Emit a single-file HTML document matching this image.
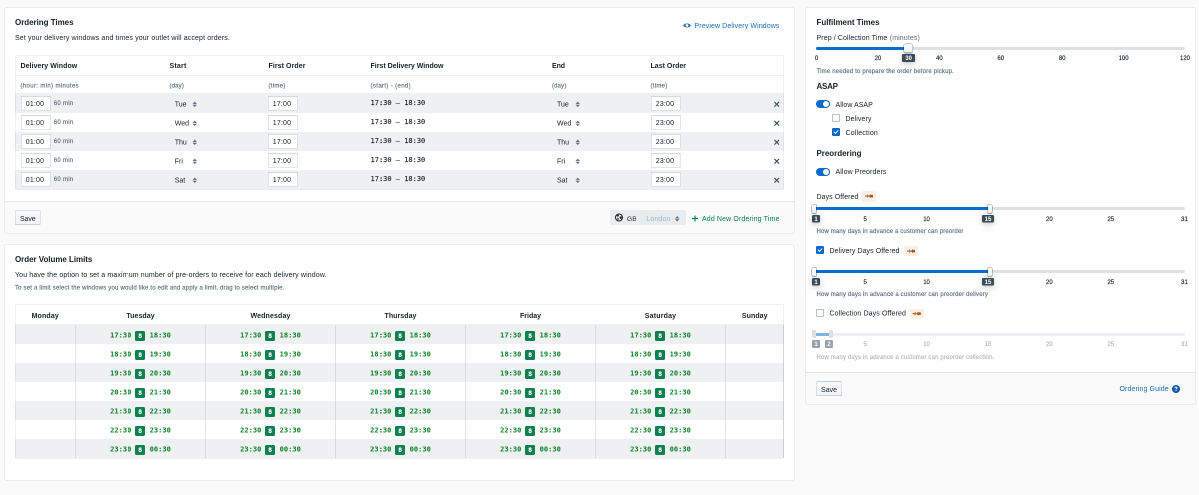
<!DOCTYPE html>
<html lang="en"><head><meta charset="utf-8"><title>Ordering Times</title>
<style>
html,body{margin:0;padding:0;background:#fafafa;overflow:hidden;width:1199px;height:495px}
#r{position:absolute;left:0;top:0;width:2398px;height:990px;transform:scale(.5);transform-origin:0 0;will-change:transform;font-family:"Liberation Sans", Arial, sans-serif;color:#182026;}
#r div,#r .a,#r .t{position:absolute}
#r .t{white-space:nowrap;display:block}
#r .m{font-family:"DejaVu Sans Mono", "Liberation Mono", monospace}
</style></head>
<body>
<div id="r">
<div style="left:10px;top:16px;width:1578px;height:450px;background:#fff;border-radius:3px;box-shadow:0 0 0 1px rgba(16,22,26,.13);"></div>
<div style="left:10px;top:403px;width:1578px;height:63px;background:#fafafa;border-top:1px solid #cdd2d6;border-radius:0 0 3px 3px;box-sizing:border-box;"></div>
<div style="left:10px;top:490px;width:1578px;height:470px;background:#fff;border-radius:3px;box-shadow:0 0 0 1px rgba(16,22,26,.13);"></div>
<div style="left:1612px;top:16px;width:779px;height:792px;background:#fff;border-radius:3px;box-shadow:0 0 0 1px rgba(16,22,26,.13);"></div>
<div style="left:1612px;top:744px;width:779px;height:64px;background:#fafafa;border-top:1px solid #cdd2d6;border-radius:0 0 3px 3px;box-sizing:border-box;"></div>
<span id="t1" class="t" style="left:30px;top:37.46px;font-size:16px;line-height:16px;font-weight:700;letter-spacing:-0.069px;">Ordering Times</span>
<span id="t2" class="t" style="left:30px;top:67.65px;font-size:14px;line-height:14px;letter-spacing:0.274px;">Set your delivery windows and times your outlet will accept orders.</span>
<svg class="a" style="left:1366px;top:43px" width="16" height="16" viewBox="0 0 16 16"><path fill="#1a6cb8" fill-rule="evenodd" d="M.2 8C3 2.600 13 2.600 15.800 8 13 13.400 3 13.400.2 8zM8 5.200a2.800 2.800 0 1 0 0 5.600 2.800 2.800 0 0 0 0-5.600z"/></svg>
<span id="t3" class="t" style="left:1389px;top:44.15px;font-size:14px;line-height:14px;color:#1c6db6;letter-spacing:0.211px;">Preview Delivery Windows</span>
<div style="left:30px;top:110px;width:1538px;height:269px;border-radius:3px;background:#fff;"></div>
<div style="left:31px;top:151px;width:1536px;height:1px;background:#e1e4e7;"></div>
<span id="t4" class="t" style="left:41px;top:124.15px;font-size:14px;line-height:14px;font-weight:700;letter-spacing:0.113px;">Delivery Window</span>
<span id="t5" class="t" style="left:339px;top:124.15px;font-size:14px;line-height:14px;font-weight:700;letter-spacing:0.419px;">Start</span>
<span id="t6" class="t" style="left:537px;top:124.15px;font-size:14px;line-height:14px;font-weight:700;letter-spacing:0.149px;">First Order</span>
<span id="t7" class="t" style="left:741px;top:124.15px;font-size:14px;line-height:14px;font-weight:700;letter-spacing:-0.006px;">First Delivery Window</span>
<span id="t8" class="t" style="left:1104px;top:124.15px;font-size:14px;line-height:14px;font-weight:700;letter-spacing:-0.151px;">End</span>
<span id="t9" class="t" style="left:1301px;top:124.15px;font-size:14px;line-height:14px;font-weight:700;letter-spacing:0.019px;">Last Order</span>
<span id="t10" class="t" style="left:41px;top:164.74px;font-size:12px;line-height:12px;color:#5c7080;letter-spacing:0.717px;-webkit-text-stroke:.3px;">(hour: min) minutes</span>
<span id="t11" class="t" style="left:339px;top:164.74px;font-size:12px;line-height:12px;color:#5c7080;letter-spacing:0.331px;-webkit-text-stroke:.3px;">(day)</span>
<span id="t12" class="t" style="left:537px;top:164.74px;font-size:12px;line-height:12px;color:#5c7080;letter-spacing:0.555px;-webkit-text-stroke:.3px;">(time)</span>
<span id="t13" class="t" style="left:741px;top:164.74px;font-size:12px;line-height:12px;color:#5c7080;letter-spacing:0.732px;-webkit-text-stroke:.3px;">(start) - (end)</span>
<span id="t14" class="t" style="left:1104px;top:164.74px;font-size:12px;line-height:12px;color:#5c7080;letter-spacing:0.331px;-webkit-text-stroke:.3px;">(day)</span>
<span id="t15" class="t" style="left:1301px;top:164.74px;font-size:12px;line-height:12px;color:#5c7080;letter-spacing:0.555px;-webkit-text-stroke:.3px;">(time)</span>
<div style="left:29.5px;top:186px;width:1538.5px;height:39.5px;background:#eef0f2;"></div>
<div style="left:42px;top:192px;width:59px;height:29px;background:#fff;border:1px solid #c8ced3;border-top-color:#adb5bc;box-sizing:border-box;"></div>
<span id="t16" class="t" style="left:51.5px;top:200.15px;font-size:14px;line-height:14px;letter-spacing:0.351px;">01:00</span>
<span id="t17" class="t" style="left:107.5px;top:200.24px;font-size:12px;line-height:12px;color:#5c7080;letter-spacing:0.578px;-webkit-text-stroke:.3px;">60 min</span>
<span id="t18" class="t" style="left:349.5px;top:201.15px;font-size:14px;line-height:14px;">Tue</span>
<svg class="a" style="left:385px;top:202.5px" width="9" height="11.5" viewBox="0 0 10 12"><path fill="#5c7080" d="M5 0 L9.4 4.8 H.6z M5 12 L9.4 7.2 H.6z"/><rect x=".6" y="4" width="8.800" height="1" fill="#5c7080"/><rect x=".6" y="7" width="8.800" height="1" fill="#5c7080"/></svg>
<div style="left:536px;top:192px;width:59px;height:29px;background:#fff;border:1px solid #c8ced3;border-top-color:#adb5bc;box-sizing:border-box;"></div>
<span id="t19" class="t" style="left:545.5px;top:200.15px;font-size:14px;line-height:14px;letter-spacing:0.351px;">17:00</span>
<span id="t20" class="t m" style="left:741px;top:197.96px;font-size:14px;line-height:14px;letter-spacing:-0.006px;-webkit-text-stroke:.25px;">17:30 – 18:30</span>
<span id="t21" class="t" style="left:1114px;top:201.15px;font-size:14px;line-height:14px;">Tue</span>
<svg class="a" style="left:1151px;top:202.5px" width="9" height="11.5" viewBox="0 0 10 12"><path fill="#5c7080" d="M5 0 L9.4 4.8 H.6z M5 12 L9.4 7.2 H.6z"/><rect x=".6" y="4" width="8.800" height="1" fill="#5c7080"/><rect x=".6" y="7" width="8.800" height="1" fill="#5c7080"/></svg>
<div style="left:1302px;top:192px;width:59px;height:29px;background:#fff;border:1px solid #c8ced3;border-top-color:#adb5bc;box-sizing:border-box;"></div>
<span id="t22" class="t" style="left:1311.5px;top:200.15px;font-size:14px;line-height:14px;letter-spacing:0.351px;">23:00</span>
<svg class="a" style="left:1548.3px;top:202.8px" width="11" height="11" viewBox="0 0 11 11"><path d="M1.500 1.500 L9.500 9.500 M9.500 1.500 L1.500 9.500" stroke="#394b59" stroke-width="2.300" stroke-linecap="round"/></svg>
<div style="left:42px;top:230px;width:59px;height:29px;background:#fff;border:1px solid #c8ced3;border-top-color:#adb5bc;box-sizing:border-box;"></div>
<span id="t23" class="t" style="left:51.5px;top:238.15px;font-size:14px;line-height:14px;letter-spacing:0.351px;">01:00</span>
<span id="t24" class="t" style="left:107.5px;top:238.24px;font-size:12px;line-height:12px;color:#5c7080;letter-spacing:0.578px;-webkit-text-stroke:.3px;">60 min</span>
<span id="t25" class="t" style="left:349.5px;top:239.15px;font-size:14px;line-height:14px;">Wed</span>
<svg class="a" style="left:385px;top:240.5px" width="9" height="11.5" viewBox="0 0 10 12"><path fill="#5c7080" d="M5 0 L9.4 4.8 H.6z M5 12 L9.4 7.2 H.6z"/><rect x=".6" y="4" width="8.800" height="1" fill="#5c7080"/><rect x=".6" y="7" width="8.800" height="1" fill="#5c7080"/></svg>
<div style="left:536px;top:230px;width:59px;height:29px;background:#fff;border:1px solid #c8ced3;border-top-color:#adb5bc;box-sizing:border-box;"></div>
<span id="t26" class="t" style="left:545.5px;top:238.15px;font-size:14px;line-height:14px;letter-spacing:0.351px;">17:00</span>
<span id="t27" class="t m" style="left:741px;top:235.96px;font-size:14px;line-height:14px;letter-spacing:-0.006px;-webkit-text-stroke:.25px;">17:30 – 18:30</span>
<span id="t28" class="t" style="left:1114px;top:239.15px;font-size:14px;line-height:14px;">Wed</span>
<svg class="a" style="left:1151px;top:240.5px" width="9" height="11.5" viewBox="0 0 10 12"><path fill="#5c7080" d="M5 0 L9.4 4.8 H.6z M5 12 L9.4 7.2 H.6z"/><rect x=".6" y="4" width="8.800" height="1" fill="#5c7080"/><rect x=".6" y="7" width="8.800" height="1" fill="#5c7080"/></svg>
<div style="left:1302px;top:230px;width:59px;height:29px;background:#fff;border:1px solid #c8ced3;border-top-color:#adb5bc;box-sizing:border-box;"></div>
<span id="t29" class="t" style="left:1311.5px;top:238.15px;font-size:14px;line-height:14px;letter-spacing:0.351px;">23:00</span>
<svg class="a" style="left:1548.3px;top:240.8px" width="11" height="11" viewBox="0 0 11 11"><path d="M1.500 1.500 L9.500 9.500 M9.500 1.500 L1.500 9.500" stroke="#394b59" stroke-width="2.300" stroke-linecap="round"/></svg>
<div style="left:29.5px;top:263.5px;width:1538.5px;height:38.0px;background:#eef0f2;"></div>
<div style="left:42px;top:268px;width:59px;height:29px;background:#fff;border:1px solid #c8ced3;border-top-color:#adb5bc;box-sizing:border-box;"></div>
<span id="t30" class="t" style="left:51.5px;top:276.15px;font-size:14px;line-height:14px;letter-spacing:0.351px;">01:00</span>
<span id="t31" class="t" style="left:107.5px;top:276.23999999999995px;font-size:12px;line-height:12px;color:#5c7080;letter-spacing:0.578px;-webkit-text-stroke:.3px;">60 min</span>
<span id="t32" class="t" style="left:349.5px;top:277.15px;font-size:14px;line-height:14px;">Thu</span>
<svg class="a" style="left:385px;top:278.5px" width="9" height="11.5" viewBox="0 0 10 12"><path fill="#5c7080" d="M5 0 L9.4 4.8 H.6z M5 12 L9.4 7.2 H.6z"/><rect x=".6" y="4" width="8.800" height="1" fill="#5c7080"/><rect x=".6" y="7" width="8.800" height="1" fill="#5c7080"/></svg>
<div style="left:536px;top:268px;width:59px;height:29px;background:#fff;border:1px solid #c8ced3;border-top-color:#adb5bc;box-sizing:border-box;"></div>
<span id="t33" class="t" style="left:545.5px;top:276.15px;font-size:14px;line-height:14px;letter-spacing:0.351px;">17:00</span>
<span id="t34" class="t m" style="left:741px;top:273.96px;font-size:14px;line-height:14px;letter-spacing:-0.006px;-webkit-text-stroke:.25px;">17:30 – 18:30</span>
<span id="t35" class="t" style="left:1114px;top:277.15px;font-size:14px;line-height:14px;">Thu</span>
<svg class="a" style="left:1151px;top:278.5px" width="9" height="11.5" viewBox="0 0 10 12"><path fill="#5c7080" d="M5 0 L9.4 4.8 H.6z M5 12 L9.4 7.2 H.6z"/><rect x=".6" y="4" width="8.800" height="1" fill="#5c7080"/><rect x=".6" y="7" width="8.800" height="1" fill="#5c7080"/></svg>
<div style="left:1302px;top:268px;width:59px;height:29px;background:#fff;border:1px solid #c8ced3;border-top-color:#adb5bc;box-sizing:border-box;"></div>
<span id="t36" class="t" style="left:1311.5px;top:276.15px;font-size:14px;line-height:14px;letter-spacing:0.351px;">23:00</span>
<svg class="a" style="left:1548.3px;top:278.8px" width="11" height="11" viewBox="0 0 11 11"><path d="M1.500 1.500 L9.500 9.500 M9.500 1.500 L1.500 9.500" stroke="#394b59" stroke-width="2.300" stroke-linecap="round"/></svg>
<div style="left:42px;top:306px;width:59px;height:29px;background:#fff;border:1px solid #c8ced3;border-top-color:#adb5bc;box-sizing:border-box;"></div>
<span id="t37" class="t" style="left:51.5px;top:314.15px;font-size:14px;line-height:14px;letter-spacing:0.351px;">01:00</span>
<span id="t38" class="t" style="left:107.5px;top:314.23999999999995px;font-size:12px;line-height:12px;color:#5c7080;letter-spacing:0.578px;-webkit-text-stroke:.3px;">60 min</span>
<span id="t39" class="t" style="left:349.5px;top:315.15px;font-size:14px;line-height:14px;">Fri</span>
<svg class="a" style="left:385px;top:316.5px" width="9" height="11.5" viewBox="0 0 10 12"><path fill="#5c7080" d="M5 0 L9.4 4.8 H.6z M5 12 L9.4 7.2 H.6z"/><rect x=".6" y="4" width="8.800" height="1" fill="#5c7080"/><rect x=".6" y="7" width="8.800" height="1" fill="#5c7080"/></svg>
<div style="left:536px;top:306px;width:59px;height:29px;background:#fff;border:1px solid #c8ced3;border-top-color:#adb5bc;box-sizing:border-box;"></div>
<span id="t40" class="t" style="left:545.5px;top:314.15px;font-size:14px;line-height:14px;letter-spacing:0.351px;">17:00</span>
<span id="t41" class="t m" style="left:741px;top:311.96px;font-size:14px;line-height:14px;letter-spacing:-0.006px;-webkit-text-stroke:.25px;">17:30 – 18:30</span>
<span id="t42" class="t" style="left:1114px;top:315.15px;font-size:14px;line-height:14px;">Fri</span>
<svg class="a" style="left:1151px;top:316.5px" width="9" height="11.5" viewBox="0 0 10 12"><path fill="#5c7080" d="M5 0 L9.4 4.8 H.6z M5 12 L9.4 7.2 H.6z"/><rect x=".6" y="4" width="8.800" height="1" fill="#5c7080"/><rect x=".6" y="7" width="8.800" height="1" fill="#5c7080"/></svg>
<div style="left:1302px;top:306px;width:59px;height:29px;background:#fff;border:1px solid #c8ced3;border-top-color:#adb5bc;box-sizing:border-box;"></div>
<span id="t43" class="t" style="left:1311.5px;top:314.15px;font-size:14px;line-height:14px;letter-spacing:0.351px;">23:00</span>
<svg class="a" style="left:1548.3px;top:316.8px" width="11" height="11" viewBox="0 0 11 11"><path d="M1.500 1.500 L9.500 9.500 M9.500 1.500 L1.500 9.500" stroke="#394b59" stroke-width="2.300" stroke-linecap="round"/></svg>
<div style="left:29.5px;top:339.5px;width:1538.5px;height:39.5px;background:#eef0f2;border-radius:0 0 2px 2px;"></div>
<div style="left:42px;top:344px;width:59px;height:29px;background:#fff;border:1px solid #c8ced3;border-top-color:#adb5bc;box-sizing:border-box;"></div>
<span id="t44" class="t" style="left:51.5px;top:352.15px;font-size:14px;line-height:14px;letter-spacing:0.351px;">01:00</span>
<span id="t45" class="t" style="left:107.5px;top:352.23999999999995px;font-size:12px;line-height:12px;color:#5c7080;letter-spacing:0.578px;-webkit-text-stroke:.3px;">60 min</span>
<span id="t46" class="t" style="left:349.5px;top:353.15px;font-size:14px;line-height:14px;">Sat</span>
<svg class="a" style="left:385px;top:354.5px" width="9" height="11.5" viewBox="0 0 10 12"><path fill="#5c7080" d="M5 0 L9.4 4.8 H.6z M5 12 L9.4 7.2 H.6z"/><rect x=".6" y="4" width="8.800" height="1" fill="#5c7080"/><rect x=".6" y="7" width="8.800" height="1" fill="#5c7080"/></svg>
<div style="left:536px;top:344px;width:59px;height:29px;background:#fff;border:1px solid #c8ced3;border-top-color:#adb5bc;box-sizing:border-box;"></div>
<span id="t47" class="t" style="left:545.5px;top:352.15px;font-size:14px;line-height:14px;letter-spacing:0.351px;">17:00</span>
<span id="t48" class="t m" style="left:741px;top:349.96px;font-size:14px;line-height:14px;letter-spacing:-0.006px;-webkit-text-stroke:.25px;">17:30 – 18:30</span>
<span id="t49" class="t" style="left:1114px;top:353.15px;font-size:14px;line-height:14px;">Sat</span>
<svg class="a" style="left:1151px;top:354.5px" width="9" height="11.5" viewBox="0 0 10 12"><path fill="#5c7080" d="M5 0 L9.4 4.8 H.6z M5 12 L9.4 7.2 H.6z"/><rect x=".6" y="4" width="8.800" height="1" fill="#5c7080"/><rect x=".6" y="7" width="8.800" height="1" fill="#5c7080"/></svg>
<div style="left:1302px;top:344px;width:59px;height:29px;background:#fff;border:1px solid #c8ced3;border-top-color:#adb5bc;box-sizing:border-box;"></div>
<span id="t50" class="t" style="left:1311.5px;top:352.15px;font-size:14px;line-height:14px;letter-spacing:0.351px;">23:00</span>
<svg class="a" style="left:1548.3px;top:354.8px" width="11" height="11" viewBox="0 0 11 11"><path d="M1.500 1.500 L9.500 9.500 M9.500 1.500 L1.500 9.500" stroke="#394b59" stroke-width="2.300" stroke-linecap="round"/></svg>
<div style="left:29.5px;top:110px;width:1538.5px;height:269px;border:1px solid rgba(16,22,26,.12);border-radius:3px;box-sizing:border-box;"></div>
<div style="left:30px;top:420px;width:51px;height:30px;background:linear-gradient(#f7f9fb,#f1f4f6);box-shadow:inset 0 0 0 1px rgba(16,22,26,.2),inset 0 -1px 0 rgba(16,22,26,.1);border-radius:3px;"></div>
<span id="t51" class="t" style="left:55.5px;transform:translateX(-50%);top:429.85px;font-size:14px;line-height:14px;letter-spacing:-0.23px;">Save</span>
<div style="left:1220px;top:420px;width:63px;height:30px;background:#ebeef0;border-radius:3px 0 0 3px;"></div>
<div style="left:1283px;top:420px;width:89px;height:30px;background:#e8ecef;border-radius:0 3px 3px 0;border-left:1px solid #dde2e6;box-sizing:border-box;"></div>
<svg class="a" style="left:1230px;top:427px" width="16" height="16" viewBox="0 0 16 16"><circle cx="8" cy="8" r="7" fill="none" stroke="#182026" stroke-width="2"/><path fill="#182026" d="M4.2 3.2 7 2.6 8 4.4 6.6 6 4.6 6.4 3.4 5z M9.4 6.4 12.6 5.6 14 8.4 12.2 11 10.4 10.4 9 8.4z M4.8 8.6 7.2 9.4 7.4 11.8 6 13.6 4.4 11z"/></svg>
<span id="t52" class="t" style="left:1254px;top:431.0px;font-size:13px;line-height:13px;letter-spacing:0.352px;">GB</span>
<span id="t53" class="t" style="left:1292.6px;top:430.15px;font-size:14px;line-height:14px;color:#a9b5bf;letter-spacing:0.297px;">London</span>
<svg class="a" style="left:1349.5px;top:431.5px" width="9" height="11.5" viewBox="0 0 10 12"><path fill="#5c7080" d="M5 0 L9.4 4.8 H.6z M5 12 L9.4 7.2 H.6z"/><rect x=".6" y="4" width="8.800" height="1" fill="#5c7080"/><rect x=".6" y="7" width="8.800" height="1" fill="#5c7080"/></svg>
<svg class="a" style="left:1384px;top:430.5px" width="12" height="12" viewBox="0 0 12 12"><path d="M6 .8V11.2M.8 6H11.2" stroke="#0d8050" stroke-width="2.3" stroke-linecap="round"/></svg>
<span id="t54" class="t" style="left:1404px;top:430.15px;font-size:14px;line-height:14px;color:#0d8050;letter-spacing:0.266px;">Add New Ordering Time</span>
<span id="t55" class="t" style="left:30px;top:511.46px;font-size:16px;line-height:16px;font-weight:700;letter-spacing:-0.084px;">Order Volume Limits</span>
<span id="t56" class="t" style="left:30px;top:542.15px;font-size:14px;line-height:14px;letter-spacing:0.272px;">You have the option to set a maximum number of pre-orders to receive for each delivery window.</span>
<span id="t57" class="t" style="left:30px;top:569.24px;font-size:12px;line-height:12px;color:#5c7080;letter-spacing:0.367px;-webkit-text-stroke:.3px;">To set a limit select the windows you would like to edit and apply a limit, drag to select multiple.</span>
<div style="left:30px;top:608px;width:1538px;height:309px;border-radius:3px;background:#fff;"></div>
<div style="left:29.5px;top:648px;width:1538.5px;height:39.5px;background:#eef0f2;"></div>
<div style="left:29.5px;top:725.5px;width:1538.5px;height:38.0px;background:#eef0f2;"></div>
<div style="left:29.5px;top:801.5px;width:1538.5px;height:38.0px;background:#eef0f2;"></div>
<div style="left:29.5px;top:877.5px;width:1538.5px;height:38.5px;background:#eef0f2;border-radius:0 0 2px 2px;"></div>
<span id="t58" class="t" style="left:90.5px;transform:translateX(-50%);top:624.15px;font-size:14px;line-height:14px;font-weight:700;letter-spacing:0.302px;">Monday</span>
<span id="t59" class="t" style="left:281.0px;transform:translateX(-50%);top:624.15px;font-size:14px;line-height:14px;font-weight:700;letter-spacing:0.176px;">Tuesday</span>
<span id="t60" class="t" style="left:541.0px;transform:translateX(-50%);top:624.15px;font-size:14px;line-height:14px;font-weight:700;letter-spacing:0.273px;">Wednesday</span>
<span id="t61" class="t" style="left:801.0px;transform:translateX(-50%);top:624.15px;font-size:14px;line-height:14px;font-weight:700;letter-spacing:0.123px;">Thursday</span>
<span id="t62" class="t" style="left:1061.0px;transform:translateX(-50%);top:624.15px;font-size:14px;line-height:14px;font-weight:700;letter-spacing:-0.003px;">Friday</span>
<span id="t63" class="t" style="left:1321.0px;transform:translateX(-50%);top:624.15px;font-size:14px;line-height:14px;font-weight:700;letter-spacing:0.385px;">Saturday</span>
<span id="t64" class="t" style="left:1509.5px;transform:translateX(-50%);top:624.15px;font-size:14px;line-height:14px;font-weight:700;letter-spacing:0.137px;">Sunday</span>
<div style="left:151px;top:650px;width:1px;height:267px;background:#c3c9ce;"></div>
<div style="left:411px;top:650px;width:1px;height:267px;background:#c3c9ce;"></div>
<div style="left:671px;top:650px;width:1px;height:267px;background:#c3c9ce;"></div>
<div style="left:931px;top:650px;width:1px;height:267px;background:#c3c9ce;"></div>
<div style="left:1191px;top:650px;width:1px;height:267px;background:#c3c9ce;"></div>
<div style="left:1451px;top:650px;width:1px;height:267px;background:#c3c9ce;"></div>
<div style="left:1566px;top:650px;width:1px;height:266px;background:#c3c9ce;"></div>
<span id="t65" class="t m" style="left:220.3px;top:662.56px;font-size:14px;line-height:14px;font-weight:700;color:#13872c;letter-spacing:0.069px;-webkit-text-stroke:.1px;">17:30</span>
<div style="left:270px;top:662px;width:20px;height:20px;background:#0d8050;border-radius:3px;"></div>
<span id="t66" class="t m" style="left:280.2px;transform:translateX(-50%);top:666.1px;font-size:12.5px;line-height:12.5px;font-weight:700;color:#fff;-webkit-text-stroke:.35px;">8</span>
<span id="t67" class="t m" style="left:299.3px;top:662.56px;font-size:14px;line-height:14px;font-weight:700;color:#13872c;letter-spacing:0.069px;-webkit-text-stroke:.1px;">18:30</span>
<span id="t68" class="t m" style="left:220.3px;top:700.56px;font-size:14px;line-height:14px;font-weight:700;color:#13872c;letter-spacing:0.069px;-webkit-text-stroke:.1px;">18:30</span>
<div style="left:270px;top:700px;width:20px;height:20px;background:#0d8050;border-radius:3px;"></div>
<span id="t69" class="t m" style="left:280.2px;transform:translateX(-50%);top:704.1px;font-size:12.5px;line-height:12.5px;font-weight:700;color:#fff;-webkit-text-stroke:.35px;">8</span>
<span id="t70" class="t m" style="left:299.3px;top:700.56px;font-size:14px;line-height:14px;font-weight:700;color:#13872c;letter-spacing:0.069px;-webkit-text-stroke:.1px;">19:30</span>
<span id="t71" class="t m" style="left:220.3px;top:738.56px;font-size:14px;line-height:14px;font-weight:700;color:#13872c;letter-spacing:0.069px;-webkit-text-stroke:.1px;">19:30</span>
<div style="left:270px;top:738px;width:20px;height:20px;background:#0d8050;border-radius:3px;"></div>
<span id="t72" class="t m" style="left:280.2px;transform:translateX(-50%);top:742.1px;font-size:12.5px;line-height:12.5px;font-weight:700;color:#fff;-webkit-text-stroke:.35px;">8</span>
<span id="t73" class="t m" style="left:299.3px;top:738.56px;font-size:14px;line-height:14px;font-weight:700;color:#13872c;letter-spacing:0.069px;-webkit-text-stroke:.1px;">20:30</span>
<span id="t74" class="t m" style="left:220.3px;top:776.56px;font-size:14px;line-height:14px;font-weight:700;color:#13872c;letter-spacing:0.069px;-webkit-text-stroke:.1px;">20:30</span>
<div style="left:270px;top:776px;width:20px;height:20px;background:#0d8050;border-radius:3px;"></div>
<span id="t75" class="t m" style="left:280.2px;transform:translateX(-50%);top:780.1px;font-size:12.5px;line-height:12.5px;font-weight:700;color:#fff;-webkit-text-stroke:.35px;">8</span>
<span id="t76" class="t m" style="left:299.3px;top:776.56px;font-size:14px;line-height:14px;font-weight:700;color:#13872c;letter-spacing:0.069px;-webkit-text-stroke:.1px;">21:30</span>
<span id="t77" class="t m" style="left:220.3px;top:814.56px;font-size:14px;line-height:14px;font-weight:700;color:#13872c;letter-spacing:0.069px;-webkit-text-stroke:.1px;">21:30</span>
<div style="left:270px;top:814px;width:20px;height:20px;background:#0d8050;border-radius:3px;"></div>
<span id="t78" class="t m" style="left:280.2px;transform:translateX(-50%);top:818.1px;font-size:12.5px;line-height:12.5px;font-weight:700;color:#fff;-webkit-text-stroke:.35px;">8</span>
<span id="t79" class="t m" style="left:299.3px;top:814.56px;font-size:14px;line-height:14px;font-weight:700;color:#13872c;letter-spacing:0.069px;-webkit-text-stroke:.1px;">22:30</span>
<span id="t80" class="t m" style="left:220.3px;top:852.56px;font-size:14px;line-height:14px;font-weight:700;color:#13872c;letter-spacing:0.069px;-webkit-text-stroke:.1px;">22:30</span>
<div style="left:270px;top:852px;width:20px;height:20px;background:#0d8050;border-radius:3px;"></div>
<span id="t81" class="t m" style="left:280.2px;transform:translateX(-50%);top:856.1px;font-size:12.5px;line-height:12.5px;font-weight:700;color:#fff;-webkit-text-stroke:.35px;">8</span>
<span id="t82" class="t m" style="left:299.3px;top:852.56px;font-size:14px;line-height:14px;font-weight:700;color:#13872c;letter-spacing:0.069px;-webkit-text-stroke:.1px;">23:30</span>
<span id="t83" class="t m" style="left:220.3px;top:890.56px;font-size:14px;line-height:14px;font-weight:700;color:#13872c;letter-spacing:0.069px;-webkit-text-stroke:.1px;">23:30</span>
<div style="left:270px;top:890px;width:20px;height:20px;background:#0d8050;border-radius:3px;"></div>
<span id="t84" class="t m" style="left:280.2px;transform:translateX(-50%);top:894.1px;font-size:12.5px;line-height:12.5px;font-weight:700;color:#fff;-webkit-text-stroke:.35px;">8</span>
<span id="t85" class="t m" style="left:299.3px;top:890.56px;font-size:14px;line-height:14px;font-weight:700;color:#13872c;letter-spacing:0.069px;-webkit-text-stroke:.1px;">00:30</span>
<span id="t86" class="t m" style="left:480.3px;top:662.56px;font-size:14px;line-height:14px;font-weight:700;color:#13872c;letter-spacing:0.069px;-webkit-text-stroke:.1px;">17:30</span>
<div style="left:530px;top:662px;width:20px;height:20px;background:#0d8050;border-radius:3px;"></div>
<span id="t87" class="t m" style="left:540.2px;transform:translateX(-50%);top:666.1px;font-size:12.5px;line-height:12.5px;font-weight:700;color:#fff;-webkit-text-stroke:.35px;">8</span>
<span id="t88" class="t m" style="left:559.3px;top:662.56px;font-size:14px;line-height:14px;font-weight:700;color:#13872c;letter-spacing:0.069px;-webkit-text-stroke:.1px;">18:30</span>
<span id="t89" class="t m" style="left:480.3px;top:700.56px;font-size:14px;line-height:14px;font-weight:700;color:#13872c;letter-spacing:0.069px;-webkit-text-stroke:.1px;">18:30</span>
<div style="left:530px;top:700px;width:20px;height:20px;background:#0d8050;border-radius:3px;"></div>
<span id="t90" class="t m" style="left:540.2px;transform:translateX(-50%);top:704.1px;font-size:12.5px;line-height:12.5px;font-weight:700;color:#fff;-webkit-text-stroke:.35px;">8</span>
<span id="t91" class="t m" style="left:559.3px;top:700.56px;font-size:14px;line-height:14px;font-weight:700;color:#13872c;letter-spacing:0.069px;-webkit-text-stroke:.1px;">19:30</span>
<span id="t92" class="t m" style="left:480.3px;top:738.56px;font-size:14px;line-height:14px;font-weight:700;color:#13872c;letter-spacing:0.069px;-webkit-text-stroke:.1px;">19:30</span>
<div style="left:530px;top:738px;width:20px;height:20px;background:#0d8050;border-radius:3px;"></div>
<span id="t93" class="t m" style="left:540.2px;transform:translateX(-50%);top:742.1px;font-size:12.5px;line-height:12.5px;font-weight:700;color:#fff;-webkit-text-stroke:.35px;">8</span>
<span id="t94" class="t m" style="left:559.3px;top:738.56px;font-size:14px;line-height:14px;font-weight:700;color:#13872c;letter-spacing:0.069px;-webkit-text-stroke:.1px;">20:30</span>
<span id="t95" class="t m" style="left:480.3px;top:776.56px;font-size:14px;line-height:14px;font-weight:700;color:#13872c;letter-spacing:0.069px;-webkit-text-stroke:.1px;">20:30</span>
<div style="left:530px;top:776px;width:20px;height:20px;background:#0d8050;border-radius:3px;"></div>
<span id="t96" class="t m" style="left:540.2px;transform:translateX(-50%);top:780.1px;font-size:12.5px;line-height:12.5px;font-weight:700;color:#fff;-webkit-text-stroke:.35px;">8</span>
<span id="t97" class="t m" style="left:559.3px;top:776.56px;font-size:14px;line-height:14px;font-weight:700;color:#13872c;letter-spacing:0.069px;-webkit-text-stroke:.1px;">21:30</span>
<span id="t98" class="t m" style="left:480.3px;top:814.56px;font-size:14px;line-height:14px;font-weight:700;color:#13872c;letter-spacing:0.069px;-webkit-text-stroke:.1px;">21:30</span>
<div style="left:530px;top:814px;width:20px;height:20px;background:#0d8050;border-radius:3px;"></div>
<span id="t99" class="t m" style="left:540.2px;transform:translateX(-50%);top:818.1px;font-size:12.5px;line-height:12.5px;font-weight:700;color:#fff;-webkit-text-stroke:.35px;">8</span>
<span id="t100" class="t m" style="left:559.3px;top:814.56px;font-size:14px;line-height:14px;font-weight:700;color:#13872c;letter-spacing:0.069px;-webkit-text-stroke:.1px;">22:30</span>
<span id="t101" class="t m" style="left:480.3px;top:852.56px;font-size:14px;line-height:14px;font-weight:700;color:#13872c;letter-spacing:0.069px;-webkit-text-stroke:.1px;">22:30</span>
<div style="left:530px;top:852px;width:20px;height:20px;background:#0d8050;border-radius:3px;"></div>
<span id="t102" class="t m" style="left:540.2px;transform:translateX(-50%);top:856.1px;font-size:12.5px;line-height:12.5px;font-weight:700;color:#fff;-webkit-text-stroke:.35px;">8</span>
<span id="t103" class="t m" style="left:559.3px;top:852.56px;font-size:14px;line-height:14px;font-weight:700;color:#13872c;letter-spacing:0.069px;-webkit-text-stroke:.1px;">23:30</span>
<span id="t104" class="t m" style="left:480.3px;top:890.56px;font-size:14px;line-height:14px;font-weight:700;color:#13872c;letter-spacing:0.069px;-webkit-text-stroke:.1px;">23:30</span>
<div style="left:530px;top:890px;width:20px;height:20px;background:#0d8050;border-radius:3px;"></div>
<span id="t105" class="t m" style="left:540.2px;transform:translateX(-50%);top:894.1px;font-size:12.5px;line-height:12.5px;font-weight:700;color:#fff;-webkit-text-stroke:.35px;">8</span>
<span id="t106" class="t m" style="left:559.3px;top:890.56px;font-size:14px;line-height:14px;font-weight:700;color:#13872c;letter-spacing:0.069px;-webkit-text-stroke:.1px;">00:30</span>
<span id="t107" class="t m" style="left:740.3px;top:662.56px;font-size:14px;line-height:14px;font-weight:700;color:#13872c;letter-spacing:0.069px;-webkit-text-stroke:.1px;">17:30</span>
<div style="left:790px;top:662px;width:20px;height:20px;background:#0d8050;border-radius:3px;"></div>
<span id="t108" class="t m" style="left:800.2px;transform:translateX(-50%);top:666.1px;font-size:12.5px;line-height:12.5px;font-weight:700;color:#fff;-webkit-text-stroke:.35px;">8</span>
<span id="t109" class="t m" style="left:819.3px;top:662.56px;font-size:14px;line-height:14px;font-weight:700;color:#13872c;letter-spacing:0.069px;-webkit-text-stroke:.1px;">18:30</span>
<span id="t110" class="t m" style="left:740.3px;top:700.56px;font-size:14px;line-height:14px;font-weight:700;color:#13872c;letter-spacing:0.069px;-webkit-text-stroke:.1px;">18:30</span>
<div style="left:790px;top:700px;width:20px;height:20px;background:#0d8050;border-radius:3px;"></div>
<span id="t111" class="t m" style="left:800.2px;transform:translateX(-50%);top:704.1px;font-size:12.5px;line-height:12.5px;font-weight:700;color:#fff;-webkit-text-stroke:.35px;">8</span>
<span id="t112" class="t m" style="left:819.3px;top:700.56px;font-size:14px;line-height:14px;font-weight:700;color:#13872c;letter-spacing:0.069px;-webkit-text-stroke:.1px;">19:30</span>
<span id="t113" class="t m" style="left:740.3px;top:738.56px;font-size:14px;line-height:14px;font-weight:700;color:#13872c;letter-spacing:0.069px;-webkit-text-stroke:.1px;">19:30</span>
<div style="left:790px;top:738px;width:20px;height:20px;background:#0d8050;border-radius:3px;"></div>
<span id="t114" class="t m" style="left:800.2px;transform:translateX(-50%);top:742.1px;font-size:12.5px;line-height:12.5px;font-weight:700;color:#fff;-webkit-text-stroke:.35px;">8</span>
<span id="t115" class="t m" style="left:819.3px;top:738.56px;font-size:14px;line-height:14px;font-weight:700;color:#13872c;letter-spacing:0.069px;-webkit-text-stroke:.1px;">20:30</span>
<span id="t116" class="t m" style="left:740.3px;top:776.56px;font-size:14px;line-height:14px;font-weight:700;color:#13872c;letter-spacing:0.069px;-webkit-text-stroke:.1px;">20:30</span>
<div style="left:790px;top:776px;width:20px;height:20px;background:#0d8050;border-radius:3px;"></div>
<span id="t117" class="t m" style="left:800.2px;transform:translateX(-50%);top:780.1px;font-size:12.5px;line-height:12.5px;font-weight:700;color:#fff;-webkit-text-stroke:.35px;">8</span>
<span id="t118" class="t m" style="left:819.3px;top:776.56px;font-size:14px;line-height:14px;font-weight:700;color:#13872c;letter-spacing:0.069px;-webkit-text-stroke:.1px;">21:30</span>
<span id="t119" class="t m" style="left:740.3px;top:814.56px;font-size:14px;line-height:14px;font-weight:700;color:#13872c;letter-spacing:0.069px;-webkit-text-stroke:.1px;">21:30</span>
<div style="left:790px;top:814px;width:20px;height:20px;background:#0d8050;border-radius:3px;"></div>
<span id="t120" class="t m" style="left:800.2px;transform:translateX(-50%);top:818.1px;font-size:12.5px;line-height:12.5px;font-weight:700;color:#fff;-webkit-text-stroke:.35px;">8</span>
<span id="t121" class="t m" style="left:819.3px;top:814.56px;font-size:14px;line-height:14px;font-weight:700;color:#13872c;letter-spacing:0.069px;-webkit-text-stroke:.1px;">22:30</span>
<span id="t122" class="t m" style="left:740.3px;top:852.56px;font-size:14px;line-height:14px;font-weight:700;color:#13872c;letter-spacing:0.069px;-webkit-text-stroke:.1px;">22:30</span>
<div style="left:790px;top:852px;width:20px;height:20px;background:#0d8050;border-radius:3px;"></div>
<span id="t123" class="t m" style="left:800.2px;transform:translateX(-50%);top:856.1px;font-size:12.5px;line-height:12.5px;font-weight:700;color:#fff;-webkit-text-stroke:.35px;">8</span>
<span id="t124" class="t m" style="left:819.3px;top:852.56px;font-size:14px;line-height:14px;font-weight:700;color:#13872c;letter-spacing:0.069px;-webkit-text-stroke:.1px;">23:30</span>
<span id="t125" class="t m" style="left:740.3px;top:890.56px;font-size:14px;line-height:14px;font-weight:700;color:#13872c;letter-spacing:0.069px;-webkit-text-stroke:.1px;">23:30</span>
<div style="left:790px;top:890px;width:20px;height:20px;background:#0d8050;border-radius:3px;"></div>
<span id="t126" class="t m" style="left:800.2px;transform:translateX(-50%);top:894.1px;font-size:12.5px;line-height:12.5px;font-weight:700;color:#fff;-webkit-text-stroke:.35px;">8</span>
<span id="t127" class="t m" style="left:819.3px;top:890.56px;font-size:14px;line-height:14px;font-weight:700;color:#13872c;letter-spacing:0.069px;-webkit-text-stroke:.1px;">00:30</span>
<span id="t128" class="t m" style="left:1000.3px;top:662.56px;font-size:14px;line-height:14px;font-weight:700;color:#13872c;letter-spacing:0.069px;-webkit-text-stroke:.1px;">17:30</span>
<div style="left:1050px;top:662px;width:20px;height:20px;background:#0d8050;border-radius:3px;"></div>
<span id="t129" class="t m" style="left:1060.2px;transform:translateX(-50%);top:666.1px;font-size:12.5px;line-height:12.5px;font-weight:700;color:#fff;-webkit-text-stroke:.35px;">8</span>
<span id="t130" class="t m" style="left:1079.3px;top:662.56px;font-size:14px;line-height:14px;font-weight:700;color:#13872c;letter-spacing:0.069px;-webkit-text-stroke:.1px;">18:30</span>
<span id="t131" class="t m" style="left:1000.3px;top:700.56px;font-size:14px;line-height:14px;font-weight:700;color:#13872c;letter-spacing:0.069px;-webkit-text-stroke:.1px;">18:30</span>
<div style="left:1050px;top:700px;width:20px;height:20px;background:#0d8050;border-radius:3px;"></div>
<span id="t132" class="t m" style="left:1060.2px;transform:translateX(-50%);top:704.1px;font-size:12.5px;line-height:12.5px;font-weight:700;color:#fff;-webkit-text-stroke:.35px;">8</span>
<span id="t133" class="t m" style="left:1079.3px;top:700.56px;font-size:14px;line-height:14px;font-weight:700;color:#13872c;letter-spacing:0.069px;-webkit-text-stroke:.1px;">19:30</span>
<span id="t134" class="t m" style="left:1000.3px;top:738.56px;font-size:14px;line-height:14px;font-weight:700;color:#13872c;letter-spacing:0.069px;-webkit-text-stroke:.1px;">19:30</span>
<div style="left:1050px;top:738px;width:20px;height:20px;background:#0d8050;border-radius:3px;"></div>
<span id="t135" class="t m" style="left:1060.2px;transform:translateX(-50%);top:742.1px;font-size:12.5px;line-height:12.5px;font-weight:700;color:#fff;-webkit-text-stroke:.35px;">8</span>
<span id="t136" class="t m" style="left:1079.3px;top:738.56px;font-size:14px;line-height:14px;font-weight:700;color:#13872c;letter-spacing:0.069px;-webkit-text-stroke:.1px;">20:30</span>
<span id="t137" class="t m" style="left:1000.3px;top:776.56px;font-size:14px;line-height:14px;font-weight:700;color:#13872c;letter-spacing:0.069px;-webkit-text-stroke:.1px;">20:30</span>
<div style="left:1050px;top:776px;width:20px;height:20px;background:#0d8050;border-radius:3px;"></div>
<span id="t138" class="t m" style="left:1060.2px;transform:translateX(-50%);top:780.1px;font-size:12.5px;line-height:12.5px;font-weight:700;color:#fff;-webkit-text-stroke:.35px;">8</span>
<span id="t139" class="t m" style="left:1079.3px;top:776.56px;font-size:14px;line-height:14px;font-weight:700;color:#13872c;letter-spacing:0.069px;-webkit-text-stroke:.1px;">21:30</span>
<span id="t140" class="t m" style="left:1000.3px;top:814.56px;font-size:14px;line-height:14px;font-weight:700;color:#13872c;letter-spacing:0.069px;-webkit-text-stroke:.1px;">21:30</span>
<div style="left:1050px;top:814px;width:20px;height:20px;background:#0d8050;border-radius:3px;"></div>
<span id="t141" class="t m" style="left:1060.2px;transform:translateX(-50%);top:818.1px;font-size:12.5px;line-height:12.5px;font-weight:700;color:#fff;-webkit-text-stroke:.35px;">8</span>
<span id="t142" class="t m" style="left:1079.3px;top:814.56px;font-size:14px;line-height:14px;font-weight:700;color:#13872c;letter-spacing:0.069px;-webkit-text-stroke:.1px;">22:30</span>
<span id="t143" class="t m" style="left:1000.3px;top:852.56px;font-size:14px;line-height:14px;font-weight:700;color:#13872c;letter-spacing:0.069px;-webkit-text-stroke:.1px;">22:30</span>
<div style="left:1050px;top:852px;width:20px;height:20px;background:#0d8050;border-radius:3px;"></div>
<span id="t144" class="t m" style="left:1060.2px;transform:translateX(-50%);top:856.1px;font-size:12.5px;line-height:12.5px;font-weight:700;color:#fff;-webkit-text-stroke:.35px;">8</span>
<span id="t145" class="t m" style="left:1079.3px;top:852.56px;font-size:14px;line-height:14px;font-weight:700;color:#13872c;letter-spacing:0.069px;-webkit-text-stroke:.1px;">23:30</span>
<span id="t146" class="t m" style="left:1000.3px;top:890.56px;font-size:14px;line-height:14px;font-weight:700;color:#13872c;letter-spacing:0.069px;-webkit-text-stroke:.1px;">23:30</span>
<div style="left:1050px;top:890px;width:20px;height:20px;background:#0d8050;border-radius:3px;"></div>
<span id="t147" class="t m" style="left:1060.2px;transform:translateX(-50%);top:894.1px;font-size:12.5px;line-height:12.5px;font-weight:700;color:#fff;-webkit-text-stroke:.35px;">8</span>
<span id="t148" class="t m" style="left:1079.3px;top:890.56px;font-size:14px;line-height:14px;font-weight:700;color:#13872c;letter-spacing:0.069px;-webkit-text-stroke:.1px;">00:30</span>
<span id="t149" class="t m" style="left:1260.3px;top:662.56px;font-size:14px;line-height:14px;font-weight:700;color:#13872c;letter-spacing:0.069px;-webkit-text-stroke:.1px;">17:30</span>
<div style="left:1310px;top:662px;width:20px;height:20px;background:#0d8050;border-radius:3px;"></div>
<span id="t150" class="t m" style="left:1320.2px;transform:translateX(-50%);top:666.1px;font-size:12.5px;line-height:12.5px;font-weight:700;color:#fff;-webkit-text-stroke:.35px;">8</span>
<span id="t151" class="t m" style="left:1339.3px;top:662.56px;font-size:14px;line-height:14px;font-weight:700;color:#13872c;letter-spacing:0.069px;-webkit-text-stroke:.1px;">18:30</span>
<span id="t152" class="t m" style="left:1260.3px;top:700.56px;font-size:14px;line-height:14px;font-weight:700;color:#13872c;letter-spacing:0.069px;-webkit-text-stroke:.1px;">18:30</span>
<div style="left:1310px;top:700px;width:20px;height:20px;background:#0d8050;border-radius:3px;"></div>
<span id="t153" class="t m" style="left:1320.2px;transform:translateX(-50%);top:704.1px;font-size:12.5px;line-height:12.5px;font-weight:700;color:#fff;-webkit-text-stroke:.35px;">8</span>
<span id="t154" class="t m" style="left:1339.3px;top:700.56px;font-size:14px;line-height:14px;font-weight:700;color:#13872c;letter-spacing:0.069px;-webkit-text-stroke:.1px;">19:30</span>
<span id="t155" class="t m" style="left:1260.3px;top:738.56px;font-size:14px;line-height:14px;font-weight:700;color:#13872c;letter-spacing:0.069px;-webkit-text-stroke:.1px;">19:30</span>
<div style="left:1310px;top:738px;width:20px;height:20px;background:#0d8050;border-radius:3px;"></div>
<span id="t156" class="t m" style="left:1320.2px;transform:translateX(-50%);top:742.1px;font-size:12.5px;line-height:12.5px;font-weight:700;color:#fff;-webkit-text-stroke:.35px;">8</span>
<span id="t157" class="t m" style="left:1339.3px;top:738.56px;font-size:14px;line-height:14px;font-weight:700;color:#13872c;letter-spacing:0.069px;-webkit-text-stroke:.1px;">20:30</span>
<span id="t158" class="t m" style="left:1260.3px;top:776.56px;font-size:14px;line-height:14px;font-weight:700;color:#13872c;letter-spacing:0.069px;-webkit-text-stroke:.1px;">20:30</span>
<div style="left:1310px;top:776px;width:20px;height:20px;background:#0d8050;border-radius:3px;"></div>
<span id="t159" class="t m" style="left:1320.2px;transform:translateX(-50%);top:780.1px;font-size:12.5px;line-height:12.5px;font-weight:700;color:#fff;-webkit-text-stroke:.35px;">8</span>
<span id="t160" class="t m" style="left:1339.3px;top:776.56px;font-size:14px;line-height:14px;font-weight:700;color:#13872c;letter-spacing:0.069px;-webkit-text-stroke:.1px;">21:30</span>
<span id="t161" class="t m" style="left:1260.3px;top:814.56px;font-size:14px;line-height:14px;font-weight:700;color:#13872c;letter-spacing:0.069px;-webkit-text-stroke:.1px;">21:30</span>
<div style="left:1310px;top:814px;width:20px;height:20px;background:#0d8050;border-radius:3px;"></div>
<span id="t162" class="t m" style="left:1320.2px;transform:translateX(-50%);top:818.1px;font-size:12.5px;line-height:12.5px;font-weight:700;color:#fff;-webkit-text-stroke:.35px;">8</span>
<span id="t163" class="t m" style="left:1339.3px;top:814.56px;font-size:14px;line-height:14px;font-weight:700;color:#13872c;letter-spacing:0.069px;-webkit-text-stroke:.1px;">22:30</span>
<span id="t164" class="t m" style="left:1260.3px;top:852.56px;font-size:14px;line-height:14px;font-weight:700;color:#13872c;letter-spacing:0.069px;-webkit-text-stroke:.1px;">22:30</span>
<div style="left:1310px;top:852px;width:20px;height:20px;background:#0d8050;border-radius:3px;"></div>
<span id="t165" class="t m" style="left:1320.2px;transform:translateX(-50%);top:856.1px;font-size:12.5px;line-height:12.5px;font-weight:700;color:#fff;-webkit-text-stroke:.35px;">8</span>
<span id="t166" class="t m" style="left:1339.3px;top:852.56px;font-size:14px;line-height:14px;font-weight:700;color:#13872c;letter-spacing:0.069px;-webkit-text-stroke:.1px;">23:30</span>
<span id="t167" class="t m" style="left:1260.3px;top:890.56px;font-size:14px;line-height:14px;font-weight:700;color:#13872c;letter-spacing:0.069px;-webkit-text-stroke:.1px;">23:30</span>
<div style="left:1310px;top:890px;width:20px;height:20px;background:#0d8050;border-radius:3px;"></div>
<span id="t168" class="t m" style="left:1320.2px;transform:translateX(-50%);top:894.1px;font-size:12.5px;line-height:12.5px;font-weight:700;color:#fff;-webkit-text-stroke:.35px;">8</span>
<span id="t169" class="t m" style="left:1339.3px;top:890.56px;font-size:14px;line-height:14px;font-weight:700;color:#13872c;letter-spacing:0.069px;-webkit-text-stroke:.1px;">00:30</span>
<div style="left:29.5px;top:608px;width:1538.5px;height:309px;border:1px solid rgba(16,22,26,.12);border-radius:3px;box-sizing:border-box;"></div>
<span id="t170" class="t" style="left:1633px;top:37.46px;font-size:16px;line-height:16px;font-weight:700;letter-spacing:-0.053px;">Fulfilment Times</span>
<span id="t171" class="t" style="left:1633px;top:67.65px;font-size:14px;line-height:14px;letter-spacing:0.22px;">Prep / Collection Time</span>
<span id="t172" class="t" style="left:1779.5px;top:67.65px;font-size:14px;line-height:14px;color:#5c7080;letter-spacing:0.216px;">(minutes)</span>
<div style="left:1632px;top:94px;width:738px;height:6px;background:#dde1e5;border-radius:3px;"></div>
<span id="t173" class="t" style="left:1633.0px;transform:translateX(-50%);top:110.04px;font-size:12px;line-height:12px;-webkit-text-stroke:.3px;">0</span>
<span id="t174" class="t" style="left:1755.8333333333333px;transform:translateX(-50%);top:110.04px;font-size:12px;line-height:12px;-webkit-text-stroke:.3px;">20</span>
<span id="t175" class="t" style="left:1878.6666666666667px;transform:translateX(-50%);top:110.04px;font-size:12px;line-height:12px;-webkit-text-stroke:.3px;">40</span>
<span id="t176" class="t" style="left:2001.5px;transform:translateX(-50%);top:110.04px;font-size:12px;line-height:12px;-webkit-text-stroke:.3px;">60</span>
<span id="t177" class="t" style="left:2124.3333333333335px;transform:translateX(-50%);top:110.04px;font-size:12px;line-height:12px;-webkit-text-stroke:.3px;">80</span>
<span id="t178" class="t" style="left:2247.1666666666665px;transform:translateX(-50%);top:110.04px;font-size:12px;line-height:12px;-webkit-text-stroke:.3px;">100</span>
<span id="t179" class="t" style="left:2370.0px;transform:translateX(-50%);top:110.04px;font-size:12px;line-height:12px;-webkit-text-stroke:.3px;">120</span>
<div style="left:1632px;top:94px;width:185.25px;height:6px;background:#0a6ccd;border-radius:3px 0 0 3px;"></div>
<div style="left:1807.55px;top:87.7px;width:17px;height:17px;background:linear-gradient(#fbfcfd,#f1f4f6);box-shadow:0 0 0 1.5px rgba(16,22,26,.32),0 1.5px 1.5px rgba(16,22,26,.3);border-radius:4px;"></div>
<div style="left:1804.45px;top:108.4px;width:25.6px;height:15.5px;background:#394b59;border-radius:2.5px;box-shadow:0 2px 8px rgba(16,22,26,.18),0 6px 20px rgba(16,22,26,.12);"></div>
<span id="t180" class="t" style="left:1817.25px;transform:translateX(-50%);top:110.09px;font-size:12px;line-height:12px;font-weight:700;color:#fff;">30</span>
<span id="t181" class="t" style="left:1633px;top:136.24px;font-size:12px;line-height:12px;color:#5c7080;letter-spacing:0.368px;-webkit-text-stroke:.3px;">Time needed to prepare the order before pickup.</span>
<span id="t182" class="t" style="left:1633px;top:164.96px;font-size:16px;line-height:16px;font-weight:700;letter-spacing:-0.538px;">ASAP</span>
<div style="left:1632px;top:200px;width:28px;height:16px;background:#0a6ccd;border-radius:8px;"></div>
<div style="left:1646px;top:202px;width:12px;height:12px;background:#fff;border-radius:6px;box-shadow:0 0 0 1px rgba(16,22,26,.15);"></div>
<span id="t183" class="t" style="left:1671px;top:202.15px;font-size:14px;line-height:14px;letter-spacing:0.076px;">Allow ASAP</span>
<div style="left:1664px;top:228px;width:16px;height:16px;background:#fdfdfe;border-radius:3px;box-shadow:inset 0 0 0 1.5px rgba(70,95,120,.5);"></div>
<span id="t184" class="t" style="left:1691px;top:230.15px;font-size:14px;line-height:14px;letter-spacing:0.178px;">Delivery</span>
<div style="left:1664px;top:256px;width:16px;height:16px;background:#0a6ccd;border-radius:3px;box-shadow:inset 0 0 0 1px rgba(16,22,26,.12);"></div>
<svg class="a" style="left:1664px;top:256px" width="16" height="16" viewBox="0 0 16 16"><path d="M4.3 8.3 6.9 10.8 11.8 5.6" fill="none" stroke="#fff" stroke-width="2.1" stroke-linecap="round" stroke-linejoin="round"/></svg>
<span id="t185" class="t" style="left:1691px;top:258.15px;font-size:14px;line-height:14px;letter-spacing:0.352px;">Collection</span>
<span id="t186" class="t" style="left:1633px;top:299.46px;font-size:16px;line-height:16px;font-weight:700;letter-spacing:-0.062px;">Preordering</span>
<div style="left:1632px;top:336px;width:28px;height:16px;background:#0a6ccd;border-radius:8px;"></div>
<div style="left:1646px;top:338px;width:12px;height:12px;background:#fff;border-radius:6px;box-shadow:0 0 0 1px rgba(16,22,26,.15);"></div>
<span id="t187" class="t" style="left:1671px;top:336.15px;font-size:14px;line-height:14px;letter-spacing:0.211px;">Allow Preorders</span>
<span id="t188" class="t" style="left:1633px;top:385.65px;font-size:14px;line-height:14px;letter-spacing:0.147px;">Days Offered</span>
<div style="left:1724.4px;top:382px;width:27.6px;height:21.6px;background:#fbefe5;border-radius:3px;"></div>
<svg class="a" style="left:1729.9px;top:387.8px" width="16.600" height="8.400" viewBox="0 0 16.600 8.400"><path fill="#a3561a" fill-opacity=".8" d="M0 3h4.200V.2L8.800 4.200 4.200 8.200V5.400H0z"/><path fill="#a3561a" d="M7.800 4.200 11.800 0V8.400z M11.400 1.700h5.200v5h-5.200z"/></svg>
<div style="left:1632px;top:414px;width:738px;height:6px;background:#dde1e5;border-radius:3px;"></div>
<span id="t189" class="t" style="left:1730.2666666666667px;transform:translateX(-50%);top:432.23999999999995px;font-size:12px;line-height:12px;-webkit-text-stroke:.3px;">5</span>
<span id="t190" class="t" style="left:1853.1px;transform:translateX(-50%);top:432.23999999999995px;font-size:12px;line-height:12px;-webkit-text-stroke:.3px;">10</span>
<span id="t191" class="t" style="left:2098.7666666666664px;transform:translateX(-50%);top:432.23999999999995px;font-size:12px;line-height:12px;-webkit-text-stroke:.3px;">20</span>
<span id="t192" class="t" style="left:2221.6px;transform:translateX(-50%);top:432.23999999999995px;font-size:12px;line-height:12px;-webkit-text-stroke:.3px;">25</span>
<span id="t193" class="t" style="left:2369.0px;transform:translateX(-50%);top:432.23999999999995px;font-size:12px;line-height:12px;-webkit-text-stroke:.3px;">31</span>
<div style="left:1632.0px;top:414px;width:343.9333333333334px;height:6px;background:#0a6ccd;"></div>
<div style="left:1624.0px;top:409.5px;width:8px;height:16px;background:linear-gradient(#fbfcfd,#f1f4f6);box-shadow:0 0 0 1.5px rgba(16,22,26,.32),0 1.5px 1.5px rgba(16,22,26,.3);border-radius:3px 0 0 3px;"></div>
<div style="left:1975.9333333333334px;top:409.5px;width:8px;height:16px;background:linear-gradient(#fbfcfd,#f1f4f6);box-shadow:0 0 0 1.5px rgba(16,22,26,.32),0 1.5px 1.5px rgba(16,22,26,.3);border-radius:0 3px 3px 0;"></div>
<div style="left:1624.2px;top:430.2px;width:15.6px;height:15.2px;background:#394b59;border-radius:2.5px;box-shadow:0 2px 8px rgba(16,22,26,.18),0 6px 20px rgba(16,22,26,.12);"></div>
<span id="t194" class="t" style="left:1632.0px;transform:translateX(-50%);top:431.74px;font-size:12px;line-height:12px;font-weight:700;color:#fff;">1</span>
<div style="left:1963.9333333333334px;top:430.2px;width:24px;height:15.2px;background:#394b59;border-radius:2.5px;box-shadow:0 2px 8px rgba(16,22,26,.18),0 6px 20px rgba(16,22,26,.12);"></div>
<span id="t195" class="t" style="left:1975.9333333333334px;transform:translateX(-50%);top:431.74px;font-size:12px;line-height:12px;font-weight:700;color:#fff;">15</span>
<span id="t196" class="t" style="left:1633px;top:456.23999999999995px;font-size:12px;line-height:12px;color:#5c7080;letter-spacing:0.275px;-webkit-text-stroke:.3px;">How many days in advance a customer can preorder</span>
<div style="left:1632px;top:492px;width:16px;height:16px;background:#0a6ccd;border-radius:3px;box-shadow:inset 0 0 0 1px rgba(16,22,26,.12);"></div>
<svg class="a" style="left:1632px;top:492px" width="16" height="16" viewBox="0 0 16 16"><path d="M4.3 8.3 6.9 10.8 11.8 5.6" fill="none" stroke="#fff" stroke-width="2.1" stroke-linecap="round" stroke-linejoin="round"/></svg>
<span id="t197" class="t" style="left:1659px;top:494.15px;font-size:14px;line-height:14px;letter-spacing:0.158px;">Delivery Days Offered</span>
<div style="left:1808.2px;top:492px;width:27.8px;height:19.6px;background:#fbefe5;border-radius:3px;"></div>
<svg class="a" style="left:1813.8px;top:497.6px" width="16.600" height="8.400" viewBox="0 0 16.600 8.400"><path fill="#a3561a" fill-opacity=".8" d="M0 3h4.200V.2L8.800 4.200 4.200 8.200V5.400H0z"/><path fill="#a3561a" d="M7.800 4.200 11.800 0V8.400z M11.400 1.700h5.200v5h-5.200z"/></svg>
<div style="left:1632px;top:540px;width:738px;height:6px;background:#dde1e5;border-radius:3px;"></div>
<span id="t198" class="t" style="left:1730.2666666666667px;transform:translateX(-50%);top:558.24px;font-size:12px;line-height:12px;-webkit-text-stroke:.3px;">5</span>
<span id="t199" class="t" style="left:1853.1px;transform:translateX(-50%);top:558.24px;font-size:12px;line-height:12px;-webkit-text-stroke:.3px;">10</span>
<span id="t200" class="t" style="left:2098.7666666666664px;transform:translateX(-50%);top:558.24px;font-size:12px;line-height:12px;-webkit-text-stroke:.3px;">20</span>
<span id="t201" class="t" style="left:2221.6px;transform:translateX(-50%);top:558.24px;font-size:12px;line-height:12px;-webkit-text-stroke:.3px;">25</span>
<span id="t202" class="t" style="left:2369.0px;transform:translateX(-50%);top:558.24px;font-size:12px;line-height:12px;-webkit-text-stroke:.3px;">31</span>
<div style="left:1632.0px;top:540px;width:343.9333333333334px;height:6px;background:#0a6ccd;"></div>
<div style="left:1624.0px;top:535.5px;width:8px;height:16px;background:linear-gradient(#fbfcfd,#f1f4f6);box-shadow:0 0 0 1.5px rgba(16,22,26,.32),0 1.5px 1.5px rgba(16,22,26,.3);border-radius:3px 0 0 3px;"></div>
<div style="left:1975.9333333333334px;top:535.5px;width:8px;height:16px;background:linear-gradient(#fbfcfd,#f1f4f6);box-shadow:0 0 0 1.5px rgba(16,22,26,.32),0 1.5px 1.5px rgba(16,22,26,.3);border-radius:0 3px 3px 0;"></div>
<div style="left:1624.2px;top:556.2px;width:15.6px;height:15.2px;background:#394b59;border-radius:2.5px;box-shadow:0 2px 8px rgba(16,22,26,.18),0 6px 20px rgba(16,22,26,.12);"></div>
<span id="t203" class="t" style="left:1632.0px;transform:translateX(-50%);top:557.74px;font-size:12px;line-height:12px;font-weight:700;color:#fff;">1</span>
<div style="left:1963.9333333333334px;top:556.2px;width:24px;height:15.2px;background:#394b59;border-radius:2.5px;box-shadow:0 2px 8px rgba(16,22,26,.18),0 6px 20px rgba(16,22,26,.12);"></div>
<span id="t204" class="t" style="left:1975.9333333333334px;transform:translateX(-50%);top:557.74px;font-size:12px;line-height:12px;font-weight:700;color:#fff;">15</span>
<span id="t205" class="t" style="left:1633px;top:582.24px;font-size:12px;line-height:12px;color:#5c7080;letter-spacing:0.307px;-webkit-text-stroke:.3px;">How many days in advance a customer can preorder delivery</span>
<div style="left:1632px;top:618px;width:16px;height:16px;background:#fdfdfe;border-radius:3px;box-shadow:inset 0 0 0 1.5px rgba(70,95,120,.5);"></div>
<span id="t206" class="t" style="left:1659px;top:619.15px;font-size:14px;line-height:14px;letter-spacing:0.235px;">Collection Days Offered</span>
<div style="left:1819.5px;top:618px;width:28px;height:19px;background:#fbefe5;border-radius:3px;"></div>
<svg class="a" style="left:1825.2px;top:623.4px" width="16.600" height="8.400" viewBox="0 0 16.600 8.400"><path fill="#a3561a" fill-opacity=".8" d="M0 3h4.200V.2L8.800 4.200 4.200 8.200V5.400H0z"/><path fill="#a3561a" d="M7.800 4.200 11.800 0V8.400z M11.400 1.700h5.200v5h-5.200z"/></svg>
<div style="left:1632px;top:666px;width:738px;height:6px;background:#eceef1;border-radius:3px;"></div>
<span id="t207" class="t" style="left:1730.2666666666667px;transform:translateX(-50%);top:682.4399999999999px;font-size:12px;line-height:12px;color:#aeb6be;-webkit-text-stroke:.3px;">5</span>
<span id="t208" class="t" style="left:1853.1px;transform:translateX(-50%);top:682.4399999999999px;font-size:12px;line-height:12px;color:#aeb6be;-webkit-text-stroke:.3px;">10</span>
<span id="t209" class="t" style="left:1975.9333333333334px;transform:translateX(-50%);top:682.4399999999999px;font-size:12px;line-height:12px;color:#aeb6be;-webkit-text-stroke:.3px;">15</span>
<span id="t210" class="t" style="left:2098.7666666666664px;transform:translateX(-50%);top:682.4399999999999px;font-size:12px;line-height:12px;color:#aeb6be;-webkit-text-stroke:.3px;">20</span>
<span id="t211" class="t" style="left:2221.6px;transform:translateX(-50%);top:682.4399999999999px;font-size:12px;line-height:12px;color:#aeb6be;-webkit-text-stroke:.3px;">25</span>
<span id="t212" class="t" style="left:2369.0px;transform:translateX(-50%);top:682.4399999999999px;font-size:12px;line-height:12px;color:#aeb6be;-webkit-text-stroke:.3px;">31</span>
<div style="left:1632.0px;top:666px;width:25.566666666666606px;height:6px;background:#7db4e6;"></div>
<div style="left:1624.0px;top:659.5px;width:8px;height:16px;background:#dde1e6;border-radius:3px 0 0 3px;"></div>
<div style="left:1657.5666666666666px;top:659.5px;width:8px;height:16px;background:#dde1e6;border-radius:0 3px 3px 0;"></div>
<div style="left:1624.2px;top:680px;width:15.6px;height:15.5px;background:#9aa1a8;border-radius:2.5px;"></div>
<span id="t213" class="t" style="left:1632.0px;transform:translateX(-50%);top:681.69px;font-size:12px;line-height:12px;font-weight:700;color:#fff;">1</span>
<div style="left:1649.9666666666667px;top:680px;width:16.2px;height:15.5px;background:#9aa1a8;border-radius:2.5px;"></div>
<span id="t214" class="t" style="left:1658.0666666666666px;transform:translateX(-50%);top:681.69px;font-size:12px;line-height:12px;font-weight:700;color:#fff;">2</span>
<span id="t215" class="t" style="left:1633px;top:707.74px;font-size:12px;line-height:12px;color:#b0b8c0;letter-spacing:0.308px;-webkit-text-stroke:.3px;">How many days in advance a customer can preorder collection.</span>
<div style="left:1632px;top:762px;width:52px;height:30px;background:linear-gradient(#f7f9fb,#f1f4f6);box-shadow:inset 0 0 0 1px rgba(16,22,26,.2),inset 0 -1px 0 rgba(16,22,26,.1);border-radius:3px;"></div>
<span id="t216" class="t" style="left:1658.0px;transform:translateX(-50%);top:771.85px;font-size:14px;line-height:14px;letter-spacing:-0.03px;">Save</span>
<span id="t217" class="t" style="left:2239px;top:770.15px;font-size:14px;line-height:14px;color:#1c6db6;letter-spacing:0.192px;">Ordering Guide</span>
<svg class="a" style="left:2344px;top:770px" width="16" height="16" viewBox="0 0 16 16"><circle cx="8" cy="8" r="8" fill="#0e5aa7"/><path fill="#fff" d="M7 12h2v-2H7zM8 3C6.3 3 5 4.3 5 6h2c0-.6.4-1 1-1s1 .4 1 1c0 1-2 1.6-2 3h2c0-1 2-1.500 2-3.200C11 4.300 9.700 3 8 3z"/></svg>
</div>
</body></html>
